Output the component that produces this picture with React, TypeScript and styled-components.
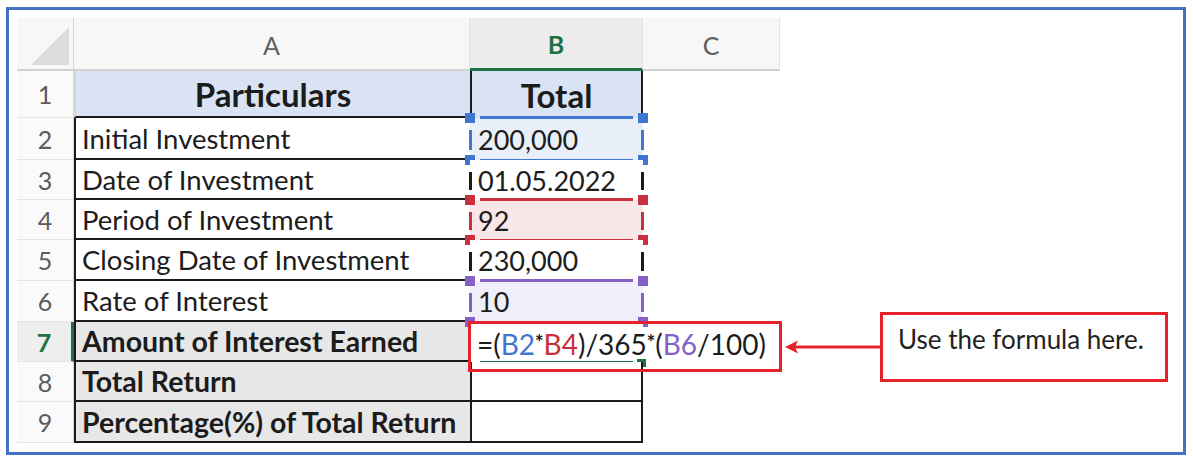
import React from "react";
import styled, { createGlobalStyle, css } from "styled-components";

const GlobalStyle = createGlobalStyle`
  html, body { margin: 0; padding: 0; background: #ffffff; }
  body { font-family: Lato, "Noto Sans", sans-serif; color: #1c1c1c; }
  * { box-sizing: border-box; }
`;

const BLUE = "#3f76cf";
const RED = "#c9303c";
const PURPLE = "#8560c6";
const GREEN = "#1f7145";
const BLACK = "#1b1b1b";
const ANNOT = "#e5222b";

const Frame = styled.div`
  margin: 7px 0 0 6px;
  width: 1180px;
  height: 448px;
  border: 3px solid #4472c4;
  padding: 8px 0 0 8px;
  display: flex;
  align-items: flex-start;
`;

const Sheet = styled.div`
  display: grid;
  grid-template-columns: 57px 396px 173px 137px;
  grid-template-rows: 53px 47px 42px 40px 40px 41px 41px 40px 40px 41px;
`;

const Corner = styled.div`
  position: relative;
  background: #f7f7f7;
  border-bottom: 2px solid #d0d0d0;
  border-right: 1px solid #d6d6d6;
  &::after {
    content: "";
    position: absolute;
    right: 4px;
    bottom: 4px;
    width: 0;
    height: 0;
    border-left: 38px solid transparent;
    border-bottom: 38px solid #dcdcdc;
  }
`;

const ColHeader = styled.div<{ $selected?: boolean }>`
  display: flex;
  align-items: center;
  justify-content: center;
  font-size: 25px;
  padding-top: 2px;
  background: ${(p) => (p.$selected ? "#ececec" : "#f7f7f7")};
  color: ${(p) => (p.$selected ? GREEN : "#5e5e5e")};
  font-weight: ${(p) => (p.$selected ? 700 : 400)};
  border-bottom: ${(p) => (p.$selected ? `3px solid ${GREEN}` : "2px solid #d0d0d0")};
  border-right: 1px solid #e2e2e2;
`;

const RowHeader = styled.div<{ $selected?: boolean }>`
  display: flex;
  align-items: center;
  justify-content: center;
  font-size: 25px;
  background: ${(p) => (p.$selected ? "#eeeeee" : "#fafafa")};
  color: ${(p) => (p.$selected ? GREEN : "#5c5c5c")};
  font-weight: ${(p) => (p.$selected ? 700 : 400)};
  border-bottom: 1px solid #e4e4e4;
  border-right: ${(p) => (p.$selected ? `3px solid ${GREEN}` : "1px solid #d6d6d6")};
`;

type Tone = "header" | "plain" | "total";

const NameCell = styled.div<{ $tone: Tone }>`
  display: flex;
  align-items: center;
  font-size: 27.5px;
  padding-left: 6px;
  white-space: nowrap;
  border-left: 2px solid ${(p) => (p.$tone === "header" ? "#d6d6d6" : BLACK)};
  border-bottom: 2px solid ${BLACK};
  ${(p) =>
    p.$tone === "header" &&
    css`
      justify-content: center;
      padding-left: 0;
      font-weight: 700;
      font-size: 33px;
      background: #dae3f3;
    `}
  ${(p) =>
    p.$tone === "total" &&
    css`
      font-weight: 700;
      font-size: 28.5px;
      background: #e8e7e7;
    `}
`;

type BTone = "header" | "blue" | "red" | "purple" | "plain" | "boxed";

const bgFor: Record<BTone, string> = {
  header: "#dae3f3",
  blue: "#e9eff9",
  red: "#f9e6e8",
  purple: "#f0eef9",
  plain: "#ffffff",
  boxed: "#ffffff",
};

const ValueCell = styled.div<{ $tone: BTone }>`
  position: relative;
  display: flex;
  align-items: center;
  font-size: 27px;
  padding-left: 8px;
  background: ${(p) => bgFor[p.$tone]};
  ${(p) =>
    p.$tone === "header" &&
    css`
      justify-content: center;
      padding-left: 0;
      font-weight: 700;
      font-size: 33px;
      border-left: 2px solid ${BLACK};
      border-right: 2px solid ${BLACK};
    `}
  ${(p) =>
    p.$tone === "boxed" &&
    css`
      border-left: 2px solid ${BLACK};
      border-right: 2px solid ${BLACK};
      border-bottom: 2px solid ${BLACK};
    `}
`;

const EmptyCell = styled.div``;

const HLine = styled.span<{ $c: string; $edge: "top" | "bottom" }>`
  position: absolute;
  left: 10px;
  right: 10px;
  height: 3px;
  background: ${(p) => p.$c};
  ${(p) => (p.$edge === "top" ? "top: -2px;" : "bottom: -2px;")}
`;

const VLine = styled.span<{ $c: string; $edge: "left" | "right" }>`
  position: absolute;
  top: 12px;
  bottom: 10px;
  width: 3px;
  background: ${(p) => p.$c};
  ${(p) => (p.$edge === "left" ? "left: -1px;" : "right: -1px;")}
`;

const Handle = styled.span<{ $c: string; $x: "left" | "right"; $y: "top" | "bottom" }>`
  position: absolute;
  width: 10px;
  height: 10px;
  background: ${(p) => p.$c};
  ${(p) => (p.$x === "left" ? "left: -5px;" : "right: -5px;")}
  ${(p) => (p.$y === "top" ? "top: -5px;" : "bottom: -5px;")}
`;

const RefFrame: React.FC<{ color: string; bottomColor?: string }> = ({ color, bottomColor }) => (
  <>
    <HLine $c={color} $edge="top" />
    <HLine $c={bottomColor ?? color} $edge="bottom" />
    <VLine $c={color} $edge="left" />
    <VLine $c={color} $edge="right" />
    <Handle $c={color} $x="left" $y="top" />
    <Handle $c={color} $x="right" $y="top" />
    <Handle $c={color} $x="left" $y="bottom" />
    <Handle $c={color} $x="right" $y="bottom" />
  </>
);

const PlainSides: React.FC = () => (
  <>
    <VLine $c={BLACK} $edge="left" />
    <VLine $c={BLACK} $edge="right" />
  </>
);

const FormulaBox = styled.div`
  position: absolute;
  left: -2px;
  top: -1px;
  width: 314px;
  height: 51px;
  border: 3px solid ${ANNOT};
  padding: 0 0 0 6px;
  font-size: 28px;
  line-height: 37px;
  white-space: nowrap;
  z-index: 2;
`;

const Ref = styled.span<{ $c: string }>`
  color: ${(p) => p.$c};
`;

const Star = styled.span`
  font-weight: 900;
  font-size: 20px;
  vertical-align: 5px;
`;

const ActiveLine = styled.span`
  position: absolute;
  left: 10px;
  right: 10px;
  bottom: -2px;
  height: 3px;
  background: ${GREEN};
`;

const ActiveHandle = styled.span`
  position: absolute;
  right: -3px;
  bottom: -5px;
  width: 9px;
  height: 8px;
  background: ${GREEN};
`;

const Annotation = styled.div`
  margin-top: 294px;
  display: flex;
  align-items: center;
`;

const Arrow = styled.svg`
  display: block;
  width: 100px;
  height: 20px;
`;

const Callout = styled.div`
  width: 288px;
  height: 70px;
  border: 3px solid ${ANNOT};
  padding: 8px 0 0 15px;
  font-size: 26px;
  white-space: nowrap;
  color: #222;
  font-family: Lato, "Noto Sans", sans-serif;
`;

const rows: { label: string; tone: Tone; value: string; b: BTone }[] = [
  { label: "Initial Investment", tone: "plain", value: "200,000", b: "blue" },
  { label: "Date of Investment", tone: "plain", value: "01.05.2022", b: "plain" },
  { label: "Period of Investment", tone: "plain", value: "92", b: "red" },
  { label: "Closing Date of Investment", tone: "plain", value: "230,000", b: "plain" },
  { label: "Rate of Interest", tone: "plain", value: "10", b: "purple" },
];

export default function App() {
  return (
    <>
      <GlobalStyle />
      <Frame>
        <Sheet>
          <Corner />
          <ColHeader>A</ColHeader>
          <ColHeader $selected>B</ColHeader>
          <ColHeader>C</ColHeader>

          <RowHeader>1</RowHeader>
          <NameCell $tone="header">Particulars</NameCell>
          <ValueCell $tone="header">Total</ValueCell>
          <EmptyCell />

          {rows.map((r, i) => (
            <React.Fragment key={r.label}>
              <RowHeader>{i + 2}</RowHeader>
              <NameCell $tone={r.tone}>{r.label}</NameCell>
              <ValueCell $tone={r.b}>
                {r.value}
                {r.b === "blue" && <RefFrame color={BLUE} />}
                {r.b === "red" && <RefFrame color={RED} />}
                {r.b === "purple" && <RefFrame color={PURPLE} bottomColor={GREEN} />}
                {r.b === "plain" && <PlainSides />}
              </ValueCell>
              <EmptyCell />
            </React.Fragment>
          ))}

          <RowHeader $selected>7</RowHeader>
          <NameCell $tone="total">Amount of Interest Earned</NameCell>
          <ValueCell $tone="plain">
            <ActiveLine />
            <ActiveHandle />
            <FormulaBox>
              =(<Ref $c={BLUE}>B2</Ref>
              <Star>*</Star>
              <Ref $c={RED}>B4</Ref>)/365<Star>*</Star>(<Ref $c={PURPLE}>B6</Ref>/100)
            </FormulaBox>
          </ValueCell>
          <EmptyCell />

          <RowHeader>8</RowHeader>
          <NameCell $tone="total">Total Return</NameCell>
          <ValueCell $tone="boxed" />
          <EmptyCell />

          <RowHeader>9</RowHeader>
          <NameCell $tone="total">Percentage(%) of Total Return</NameCell>
          <ValueCell $tone="boxed" />
          <EmptyCell />
        </Sheet>

        <Annotation>
          <Arrow viewBox="0 0 100 20">
            <line x1="100" y1="10" x2="12" y2="10" stroke={ANNOT} strokeWidth="3" />
            <polygon points="5,10 18,3.5 15,10 18,16.5" fill={ANNOT} />
          </Arrow>
          <Callout>Use the formula here.</Callout>
        </Annotation>
      </Frame>
    </>
  );
}
